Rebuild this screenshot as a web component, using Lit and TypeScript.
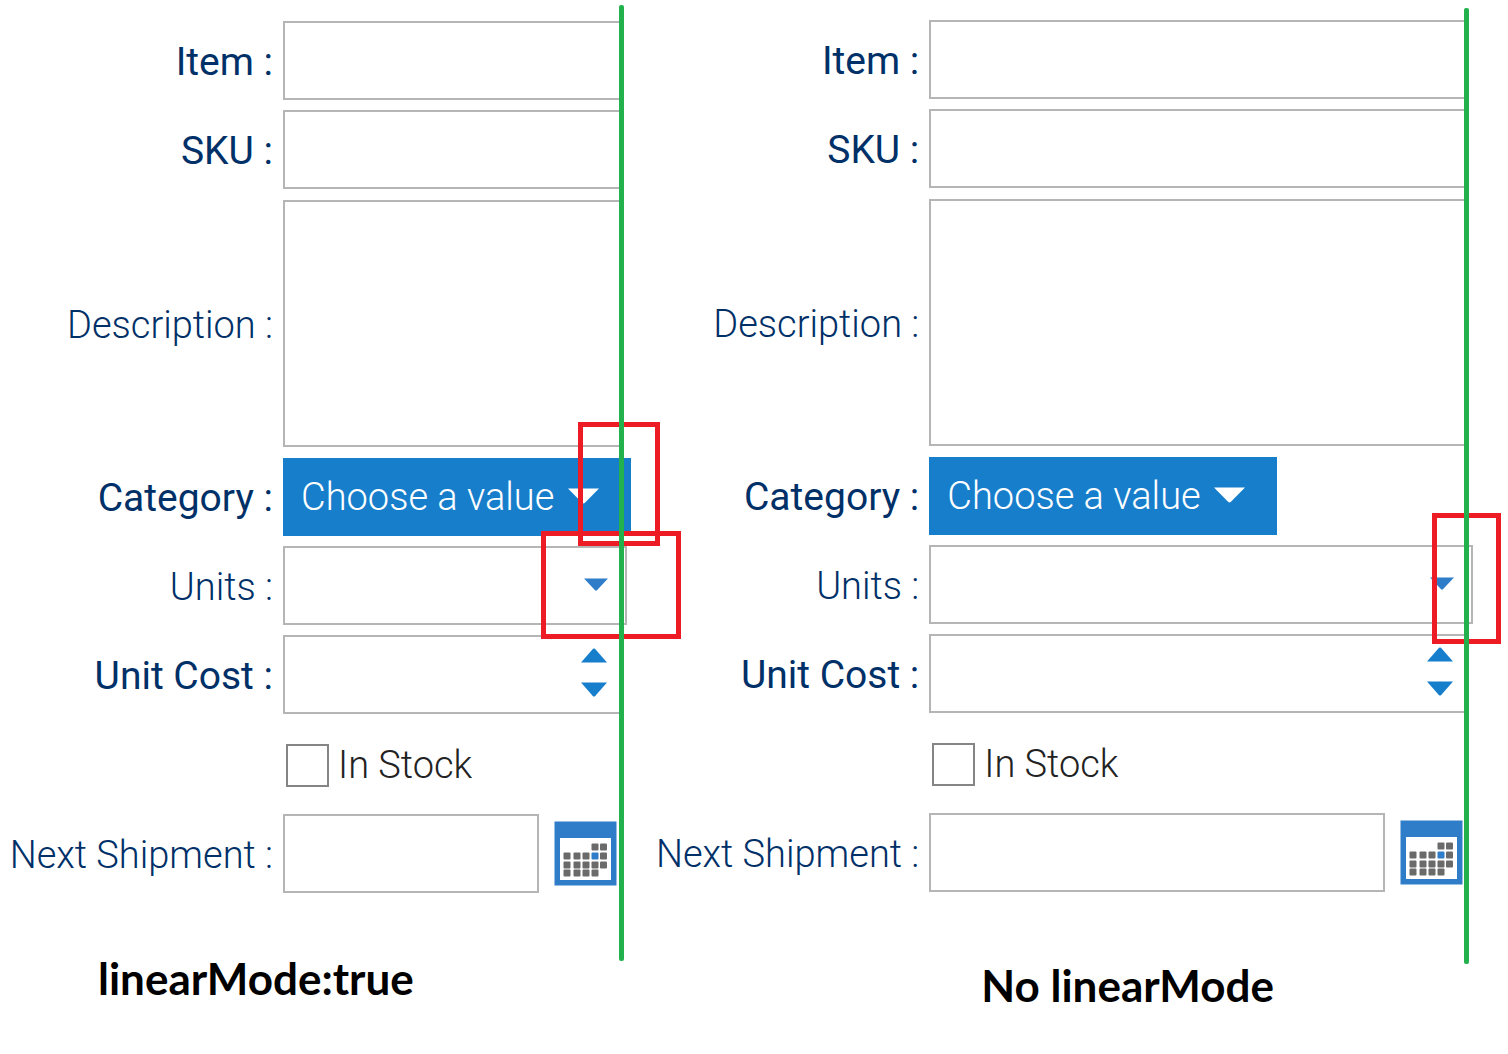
import { LitElement, html, css, svg } from "lit";
import { customElement, property } from "lit/decorators.js";

const downArrow = (w: number, h: number) => html`
  <svg class="arrow" width=${w} height=${h} viewBox="0 0 26 14" preserveAspectRatio="none" aria-hidden="true">
    <path d="M0 0.5H26L14 13.2Q13 14 12 13.2Z" fill="currentColor" />
  </svg>
`;

const upArrow = html`
  <svg class="arrow" width="26" height="15" viewBox="0 0 26 14" preserveAspectRatio="none" aria-hidden="true">
    <path d="M0 13.5H26L14 0.8Q13 0 12 0.8Z" fill="currentColor" />
  </svg>
`;

// Day squares of the calendar icon: [x, y]
const days: [number, number][] = [
  [38, 23], [46.5, 23],
  [10, 32], [20, 32], [29, 32], [46.5, 32],
  [10, 41], [20, 41], [29, 41], [38, 41], [46.5, 41],
  [10, 49], [20, 49], [29, 49], [38, 49],
];

const calendarIcon = html`
  <svg width="63" height="65" viewBox="0 0 63 65" aria-hidden="true">
    <rect x="0.5" y="0.5" width="62" height="64" fill="#2f7dc9" />
    <rect x="6" y="17" width="51" height="42" fill="#fff" />
    ${days.map(([x, y]) => svg`<rect x=${x - 0.5} y=${y - 0.5} width="7" height="7" rx="1" fill="#6a6a6a" />`)}
    <rect x="37.5" y="31.5" width="7" height="7" rx="1" fill="#2f7dc9" />
  </svg>
`;

@customElement("item-form")
export class ItemForm extends LitElement {
  @property({ type: Boolean, reflect: true }) linear = false;

  static styles = css`
    :host {
      display: block;
      font-family: Roboto, "Liberation Sans", sans-serif;
      font-size: 38px;
      font-weight: 300;
      line-height: 46px;
      color: #003068;
    }
    * {
      box-sizing: border-box;
    }
    .form {
      position: relative;
      display: grid;
      grid-template-columns: 273px minmax(0, 1fr);
      column-gap: 10px;
      row-gap: 10px;
      align-items: center;
    }
    .label {
      text-align: right;
      white-space: nowrap;
      padding-top: 3px;
    }
    .required {
      font-size: 39px;
      font-weight: 400;
    }
    .field {
      position: relative;
      display: flex;
      align-items: flex-end;
      min-height: 79px;
      min-width: 0;
    }
    .field-tall {
      min-height: 248px;
    }
    .box {
      display: block;
      flex: 1;
      min-width: 0;
      height: 79px;
      margin: 0;
      padding: 0 16px;
      border: 2px solid #b5b5b5;
      border-radius: 0;
      background: #fff;
      color: inherit;
      font: inherit;
      appearance: none;
      resize: none;
      outline-color: #177ecc;
    }
    .area {
      height: 247px;
    }
    .units {
      margin-right: -6px;
    }
    .category {
      height: 78px;
      width: 348px;
      flex: none;
      padding: 0 18px;
      border: 0;
      border-radius: 0;
      background: #177ecc;
      color: #fff;
      font: inherit;
      appearance: none;
    }
    .arrow {
      display: block;
    }
    .category-arrow {
      position: absolute;
      left: 285px;
      top: 31px;
      color: #fff;
      pointer-events: none;
    }
    .units-arrow {
      position: absolute;
      right: 13px;
      top: 32px;
      color: #2f7dc9;
      pointer-events: none;
    }
    .stepper {
      position: absolute;
      right: 14px;
      top: 13px;
      display: grid;
      gap: 19px;
    }
    .step,
    .pick {
      display: block;
      padding: 0;
      border: 0;
      background: none;
      color: #177ecc;
    }
    .pick {
      margin-left: 15px;
      margin-right: 4px;
      padding-bottom: 7px;
    }
    .pick svg {
      display: block;
    }
    .stock {
      grid-column: 2;
      align-items: center;
      gap: 9px;
      min-height: 80px;
      padding: 2px 0 0 3px;
      color: #222;
    }
    .check {
      appearance: none;
      width: 43px;
      height: 43px;
      margin: 0;
      border: 2px solid #858585;
      border-radius: 0;
      background: #fff;
    }
    .mark {
      position: absolute;
      z-index: 1;
      border: 5px solid #ed1c24;
      pointer-events: none;
    }
    .mark-category {
      right: -39px;
      top: -35px;
      width: 82px;
      height: 124px;
    }
    .mark-units {
      right: -34px;
      top: -32px;
      width: 69px;
      height: 131px;
    }
    :host([linear]) .mark-units {
      right: -60px;
      top: -15px;
      width: 140px;
      height: 108px;
    }
    .guide {
      position: absolute;
      z-index: 2;
      right: -2px;
      top: -12px;
      bottom: -72px;
      width: 5px;
      border-radius: 2px;
      background: #22b14c;
      pointer-events: none;
    }
    :host([linear]) .guide {
      right: -3px;
      top: -16px;
      bottom: -68px;
    }
  `;

  render() {
    return html`
      <form class="form" @submit=${(e: Event) => e.preventDefault()}>
        <label class="label required" for="item">Item :</label>
        <div class="field"><input class="box" id="item" type="text" /></div>

        <label class="label required" for="sku">SKU :</label>
        <div class="field"><input class="box" id="sku" type="text" /></div>

        <label class="label" for="description">Description :</label>
        <div class="field field-tall"><textarea class="box area" id="description"></textarea></div>

        <label class="label required" for="category">Category :</label>
        <div class="field">
          <select class="category" id="category">
            <option>Choose a value</option>
          </select>
          <span class="category-arrow">${downArrow(31, 16)}</span>
          ${this.linear ? html`<div class="mark mark-category"></div>` : null}
        </div>

        <label class="label" for="units">Units :</label>
        <div class="field">
          <select class="box units" id="units">
            <option></option>
          </select>
          <span class="units-arrow">${downArrow(24, 13)}</span>
          <div class="mark mark-units"></div>
        </div>

        <label class="label required" for="cost">Unit Cost :</label>
        <div class="field">
          <input class="box" id="cost" type="text" inputmode="decimal" />
          <div class="stepper">
            <button class="step" type="button" aria-label="Increase">${upArrow}</button>
            <button class="step" type="button" aria-label="Decrease">${downArrow(26, 15)}</button>
          </div>
        </div>

        <div class="field stock">
          <input class="check" id="stock" type="checkbox" />
          <label for="stock">In Stock</label>
        </div>

        <label class="label" for="shipment">Next Shipment :</label>
        <div class="field">
          <input class="box" id="shipment" type="text" />
          <button class="pick" type="button" aria-label="Choose date">${calendarIcon}</button>
        </div>
        <div class="guide"></div>
      </form>
    `;
  }
}

@customElement("app-root")
export class AppRoot extends LitElement {
  static styles = css`
    :host {
      display: block;
      min-height: 100vh;
      background: #fff;
    }
    .page {
      display: grid;
      grid-template-columns: 3fr 4fr;
      overflow: hidden;
    }
    .panel {
      padding: 20px 41px 0 0;
      min-width: 0;
    }
    .panel-linear {
      padding: 21px 25px 0 0;
    }
    .caption {
      margin: 69px 0 0;
      padding: 0 0 32px 335px;
      font: 700 44px/48px Lato, "Open Sans", sans-serif;
      color: #000;
      white-space: nowrap;
    }
    .panel-linear .caption {
      margin-top: 61px;
      padding-left: 98px;
    }
  `;

  render() {
    return html`
      <main class="page">
        <section class="panel panel-linear">
          <item-form linear></item-form>
          <h2 class="caption">linearMode:true</h2>
        </section>
        <section class="panel">
          <item-form></item-form>
          <h2 class="caption">No linearMode</h2>
        </section>
      </main>
    `;
  }
}
